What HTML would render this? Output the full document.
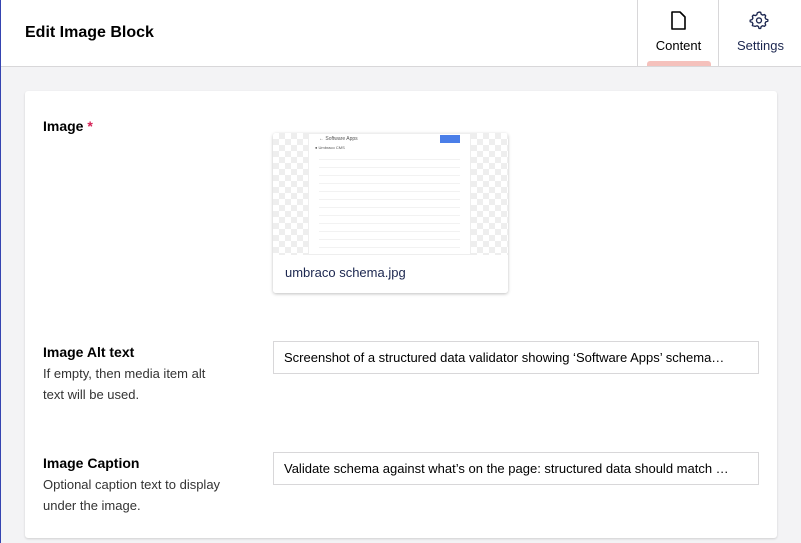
<!DOCTYPE html>
<html><head><style>
*{box-sizing:border-box;margin:0;padding:0}
body{width:801px;height:543px;overflow:hidden;background:#f3f3f5;font-family:"Liberation Sans",sans-serif;color:#1b264f;position:relative}
.bl{position:absolute;left:0;top:0;width:1px;height:543px;background:#3544b1;z-index:5}
.hdr{position:absolute;left:0;top:0;width:801px;height:67px;background:#fff;border-bottom:1px solid #d8d7d9}
.title{position:absolute;left:25px;top:24px;font-size:16px;font-weight:bold;color:#000}
.tab{position:absolute;top:0;height:66px;border-left:1px solid #d8d7d9;text-align:center;font-size:13px}
.card{position:absolute;left:25px;top:91px;width:752px;height:447px;background:#fff;border-radius:3px;box-shadow:0 1px 2px rgba(0,0,0,.15)}
.lbl{position:absolute;left:43px;font-size:14px;font-weight:bold;color:#000}
.desc{position:absolute;left:43px;font-size:13px;line-height:21px;color:#333;width:180px}
.inp{position:absolute;left:273px;width:486px;height:33px;border:1px solid #d8d7d9;font-size:13px;color:#000;padding:8px 10px;white-space:nowrap;overflow:hidden}
.img{position:absolute;left:273px;top:133px;width:235px;height:160px;border-radius:3px;box-shadow:0 1px 3px rgba(0,0,0,.25);overflow:hidden;background:#fff}
.chk{position:absolute;left:0;top:0;width:235px;height:122px;background-color:#fff;background-image:linear-gradient(45deg,#eee 25%,transparent 25%,transparent 75%,#eee 75%),linear-gradient(45deg,#eee 25%,transparent 25%,transparent 75%,#eee 75%);background-size:12px 12px;background-position:0 0,6px 6px}
.shot{position:absolute;left:35px;top:0;width:163px;height:122px;background:#fff;border:1px solid #eee}
.row{height:8px;border-bottom:1px solid #f2f2f2;margin:0 10px}
</style></head><body>
<div class="bl"></div>
<div class="hdr">
<div class="title">Edit Image Block</div>
<div class="tab" style="left:637px;width:81px">
<svg style="position:absolute;left:32px;top:10px" width="17" height="21" viewBox="0 0 17 21"><path d="M2 2h8l5 5v12H2z" fill="none" stroke="#000" stroke-width="1.6" stroke-linejoin="round"/></svg>
<div style="position:absolute;left:0;width:81px;top:38px;color:#000">Content</div>
<div style="position:absolute;left:9px;top:61px;width:64px;height:5px;background:#f5c1bc;border-radius:3px 3px 0 0"></div>
</div>
<div class="tab" style="left:718px;width:83px">
<svg style="position:absolute;left:30px;top:10px" width="20" height="20" viewBox="0 0 24 24"><path d="M12 2.5l2 .3.6 2.3 1.7 1 2.3-.7 1.4 1.5-.7 2.3 1 1.7 2.3.6v2l-2.3.6-1 1.7.7 2.3-1.4 1.5-2.3-.7-1.7 1-.6 2.3h-2l-.6-2.3-1.7-1-2.3.7L4 18.7l.7-2.3-1-1.7-2.3-.6v-2l2.3-.6 1-1.7L4 7.5 5.4 6l2.3.7 1.7-1 .6-2.3z" fill="none" stroke="#1b264f" stroke-width="1.6" stroke-linejoin="round"/><circle cx="12" cy="12.5" r="3" fill="none" stroke="#1b264f" stroke-width="1.6"/></svg>
<div style="position:absolute;left:0;width:83px;top:38px">Settings</div>
</div>
</div>
<div class="card"></div>
<div class="lbl" style="top:118px">Image <span style="color:#d42054">*</span></div>
<div class="img"><div class="chk"></div>
<div class="shot">
<div style="height:10px;font-size:5px;padding:2px 10px;color:#555">← Software Apps<span style="float:right;background:#4a7ee8;width:20px;height:8px;margin-top:-1px"></span></div>
<div style="height:8px;font-size:4px;padding:1px 6px;color:#555">● Umbraco CMS</div>
<div class="row"></div><div class="row"></div><div class="row"></div><div class="row"></div><div class="row"></div><div class="row"></div><div class="row"></div><div class="row"></div><div class="row"></div><div class="row"></div><div class="row"></div><div class="row"></div>
</div>
<div style="position:absolute;left:0;top:122px;width:235px;height:38px;background:#fff;padding:10px 12px;font-size:13px;color:#1b264f">umbraco schema.jpg</div>
</div>
<div class="lbl" style="top:344px">Image Alt text</div>
<div class="desc" style="top:363px">If empty, then media item alt text will be used.</div>
<div class="inp" style="top:341px">Screenshot of a structured data validator showing ‘Software Apps’ schema…</div>
<div class="lbl" style="top:455px">Image Caption</div>
<div class="desc" style="top:474px">Optional caption text to display under the image.</div>
<div class="inp" style="top:452px">Validate schema against what’s on the page: structured data should match …</div>
</body></html>
